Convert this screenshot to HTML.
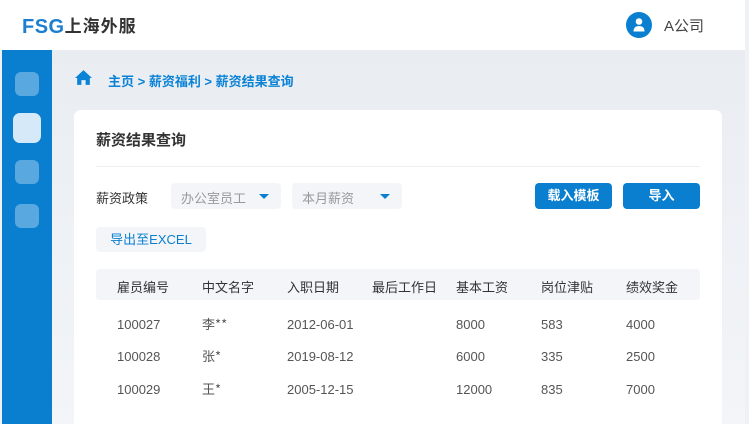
<!DOCTYPE html>
<html><head><meta charset="utf-8"><style>
*{margin:0;padding:0;box-sizing:border-box}
html,body{width:749px;height:424px;overflow:hidden}
body{font-family:"Liberation Sans","Noto Sans CJK SC",sans-serif;background:#eef1f5;position:relative}
.hdr{position:absolute;left:0;top:0;width:745px;height:50px;background:#fff}
.logo{position:absolute;left:22px;top:13px;font-size:20px;color:#1a7fd0;letter-spacing:0.5px;font-weight:bold;white-space:nowrap}
.logo span{color:#333;font-weight:bold;font-size:17px;letter-spacing:1px;font-family:"Noto Sans CJK SC",sans-serif;position:relative;top:-1px}
.user{position:absolute;left:626px;top:12px;width:26px;height:26px;border-radius:50%;background:#0a7fd0}
.uname{position:absolute;left:664px;top:15px;font-size:15px;color:#444}
.side{position:absolute;left:2px;top:50px;width:50px;height:374px;background:#0a7fd0}
.sq{position:absolute;left:13px;width:24px;height:24px;border-radius:6px;background:#5aa8e0}
.sq.a{left:11px;width:28px;height:30px;background:#d5e9f8;border-radius:7px}
.main{position:absolute;left:52px;top:50px;width:693px;height:374px;background:linear-gradient(#e9edf2,#f3f5f8)}
.bc{position:absolute;left:108px;top:71px;font-size:13px;font-weight:bold;color:#0a82d6}
.card{position:absolute;left:74px;top:110px;width:648px;height:314px;background:#fff;border-radius:7px 7px 0 0}
.t{position:absolute;font-size:13px;color:#333;white-space:nowrap}
.d{color:#555}
.n{font-family:"Noto Sans CJK SC",sans-serif;margin-top:-3px}
.sel{position:absolute;top:183px;height:26px;background:#f3f5f8;border-radius:4px;font-size:13px;color:#999;padding:5px 10px}
.tri{position:absolute;top:11px;width:0;height:0;border-left:5px solid transparent;border-right:5px solid transparent;border-top:5px solid #0a7fd0}
.btn{position:absolute;top:183px;height:26px;background:#0a7fd0;border-radius:4px;color:#fff;font-size:13px;font-weight:bold;text-align:center;line-height:26px}
.th{position:absolute;left:96px;top:269px;width:604px;height:31px;background:#f3f5f8;border-radius:3px}
</style></head><body>
<div class="hdr">
<div class="logo">FSG<span>上海外服</span></div>
<div class="user"><svg width="26" height="26" viewBox="0 0 26 26"><circle cx="13" cy="9.5" r="3.3" fill="#fff"/><path d="M7.5 19.5 Q7.5 14 13 14 Q18.5 14 18.5 19.5 Z" fill="#fff"/></svg></div>
<div class="uname">A公司</div>
</div>
<div class="side">
<div class="sq" style="top:22px"></div>
<div class="sq a" style="top:63px"></div>
<div class="sq" style="top:110px"></div>
<div class="sq" style="top:154px"></div>
</div>
<div class="main"></div>
<svg style="position:absolute;left:74px;top:69px" width="19" height="17" viewBox="0 0 18 16"><path d="M9 1 L1 8.5 L3 8.5 L3 15 L7 15 L7 10.5 L11 10.5 L11 15 L15 15 L15 8.5 L17 8.5 Z" fill="#0a82d6"/></svg>
<div class="bc">主页 &gt; 薪资福利 &gt; 薪资结果查询</div>
<div class="card"></div>
<div class="t" style="left:96px;top:129px;font-size:15px;font-weight:bold">薪资结果查询</div>
<div style="position:absolute;left:96px;top:166px;width:604px;height:1px;background:#eceef1"></div>
<div class="t" style="left:96px;top:188px">薪资政策</div>
<div class="sel" style="left:171px;width:110px">办公室员工<div class="tri" style="left:88px"></div></div>
<div class="sel" style="left:292px;width:110px">本月薪资<div class="tri" style="left:88px"></div></div>
<div class="btn" style="left:535px;width:77px">载入模板</div>
<div class="btn" style="left:623px;width:77px">导入</div>
<div style="position:absolute;left:96px;top:227px;width:110px;height:25px;background:#f3f5f8;border-radius:4px;font-size:13px;color:#0a7fd0;text-align:center;line-height:25px">导出至EXCEL</div>
<div class="th"></div>
<div class="t" style="left:117px;top:277px">雇员编号</div>
<div class="t" style="left:202px;top:277px">中文名字</div>
<div class="t" style="left:287px;top:277px">入职日期</div>
<div class="t" style="left:372px;top:277px">最后工作日</div>
<div class="t" style="left:456px;top:277px">基本工资</div>
<div class="t" style="left:541px;top:277px">岗位津贴</div>
<div class="t" style="left:626px;top:277px">绩效奖金</div>
<div class="t d" style="left:117px;top:317px">100027</div><div class="t d n" style="left:202px;top:317px">李**</div><div class="t d" style="left:287px;top:317px">2012-06-01</div><div class="t d" style="left:456px;top:317px">8000</div><div class="t d" style="left:541px;top:317px">583</div><div class="t d" style="left:626px;top:317px">4000</div>
<div class="t d" style="left:117px;top:349px">100028</div><div class="t d n" style="left:202px;top:349px">张*</div><div class="t d" style="left:287px;top:349px">2019-08-12</div><div class="t d" style="left:456px;top:349px">6000</div><div class="t d" style="left:541px;top:349px">335</div><div class="t d" style="left:626px;top:349px">2500</div>
<div class="t d" style="left:117px;top:382px">100029</div><div class="t d n" style="left:202px;top:382px">王*</div><div class="t d" style="left:287px;top:382px">2005-12-15</div><div class="t d" style="left:456px;top:382px">12000</div><div class="t d" style="left:541px;top:382px">835</div><div class="t d" style="left:626px;top:382px">7000</div>
</body></html>
